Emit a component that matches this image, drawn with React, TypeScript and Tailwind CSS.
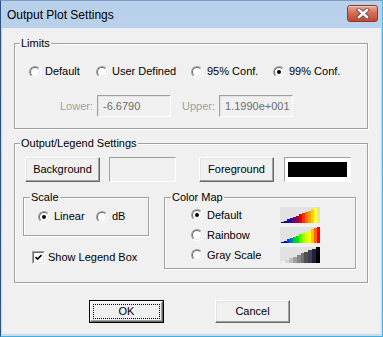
import type { ReactNode } from "react";

const DEFAULT_MAP = ["#000020", "#000080", "#1010b0", "#400090", "#700070", "#a00040", "#e00000", "#ff3000", "#ff7000", "#f0a000", "#ffd000", "#ffff40", "#e8e4a0"];
const RAINBOW_MAP = ["#000080", "#0000d0", "#0040ff", "#008090", "#00c060", "#00e000", "#40ff00", "#a0ff00", "#e0ff00", "#ffff00", "#ffc000", "#ff6000", "#ff0000"];
const GRAY_MAP = ["#f4f4ec", "#c8dcd4", "#b8c4c4", "#a0a0a0", "#888888", "#707078", "#505048", "#404058", "#202040", "#000000"];

function Radio({ checked }: { checked?: boolean }) {
  return (
    <span className="flex h-[12px] w-[12px] shrink-0 rounded-full border border-t-[#a0a0a0] border-l-[#a0a0a0] border-r-white border-b-white">
      <span className="flex h-full w-full items-center justify-center rounded-full border border-t-[#696969] border-l-[#696969] border-r-[#e3e3e3] border-b-[#e3e3e3] bg-white">
        {checked && <span className="h-[4px] w-[4px] rounded-full bg-black" />}
      </span>
    </span>
  );
}

function RadioItem({ label, checked, className = "" }: { label: string; checked?: boolean; className?: string }) {
  return (
    <div className={`flex items-center gap-[4px] ${className}`}>
      <Radio checked={checked} />
      <span>{label}</span>
    </div>
  );
}

function Group({ label, className = "", legendClass = "ml-[5px]", children }: { label: string; className?: string; legendClass?: string; children: ReactNode }) {
  return (
    <fieldset className={`border border-[#a0a0a0] shadow-[inset_1px_1px_0_#fff,1px_1px_0_#fff] ${className}`}>
      <legend className={`bg-[#f0f0f0] px-[1px] leading-[13px] ${legendClass}`}>{label}</legend>
      {children}
    </fieldset>
  );
}

function Button({ label, className = "" }: { label: string; className?: string }) {
  return (
    <div className={`flex items-center justify-center border border-t-white border-l-white border-r-[#696969] border-b-[#696969] shadow-[inset_-1px_-1px_0_#a0a0a0,inset_1px_1px_0_#e3e3e3] ${className}`}>
      {label}
    </div>
  );
}

function DisabledField({ value }: { value: string }) {
  return (
    <div className="flex h-[22px] w-[74px] items-center border border-t-[#a0a0a0] border-l-[#a0a0a0] border-r-white border-b-white pl-[5px] text-[#6d6d6d] shadow-[inset_1px_1px_0_#e3e3e3]">
      {value}
    </div>
  );
}

function ColorRamp({ colors, barWidth }: { colors: string[]; barWidth: number }) {
  return (
    <div className="flex h-[16px] w-[40px] items-end bg-[#e2e2e2] pl-[1px]">
      {colors.map((c, i) => (
        <div key={i} style={{ width: barWidth, height: Math.max(1, Math.round(((i + 1) / colors.length) * 16)), background: c }} />
      ))}
    </div>
  );
}

function CloseIcon() {
  return (
    <svg width="14" height="11" viewBox="0 0 14 11">
      <path d="M3 2 L11 9 M11 2 L3 9" stroke="#6a4a46" strokeWidth="4.2" strokeLinecap="square" />
      <path d="M3 2 L11 9 M11 2 L3 9" stroke="#ffffff" strokeWidth="2.4" strokeLinecap="square" />
    </svg>
  );
}

export default function App() {
  return (
    <div className="flex h-[337px] w-[383px] flex-col border border-t-[#7a9cc2] border-l-[#2d5180] border-r-[#46b8e6] border-b-[#3cb0e2] bg-gradient-to-b from-[#b8d0ea] to-[#c8dbef] font-['Liberation_Sans',Arial,sans-serif] text-[11px] text-black">
      {/* title bar */}
      <div className="flex h-[27px] shrink-0 items-start justify-between pl-[6px] pr-[4px]">
        <span className="mt-[7px] text-[12px] leading-[14px] text-black">Output Plot Settings</span>
        <div className="mt-[4px] flex h-[17px] w-[31px] items-center justify-center rounded-[3px] border border-[#8b3a2f] bg-gradient-to-b from-[#e9a796] via-[#d46a55] to-[#c4452e] shadow-[inset_0_1px_0_#f4c7bb]">
          <CloseIcon />
        </div>
      </div>

      {/* client area */}
      <div className="mx-[1px] mb-[2px] flex-1 border border-[#e6eef8] bg-[#f0f0f0]">
        <Group label="Limits" className="ml-[11px] mt-[8px] w-[354px] pb-[11px]">
          <div className="mt-[15px] flex h-[13px] items-center pl-[14px] leading-[13px]">
            <RadioItem label="Default" className="w-[67px]" />
            <RadioItem label="User Defined" className="w-[95px]" />
            <RadioItem label="95% Conf." className="w-[82px]" />
            <RadioItem label="99% Conf." checked />
          </div>
          <div className="mt-[17px] flex items-center pl-[45px]">
            <span className="w-[37px] text-[#a0a0a0]">Lower:</span>
            <DisabledField value="-6.6790" />
            <span className="ml-[11px] w-[37px] text-[#a0a0a0]">Upper:</span>
            <DisabledField value="1.1990e+001" />
          </div>
        </Group>

        <Group label="Output/Legend Settings" className="ml-[11px] mt-[8px] w-[354px] pb-[13px]">
          <div className="mt-[7px] flex h-[25px] items-stretch pl-[10px]">
            <Button label="Background" className="w-[75px]" />
            <div className="ml-[9px] w-[67px] border border-t-[#a0a0a0] border-l-[#a0a0a0] border-r-white border-b-white bg-[#f0f0f0]" />
            <Button label="Foreground" className="ml-[23px] w-[75px]" />
            <div className="ml-[10px] w-[67px] border border-t-[#a0a0a0] border-l-[#a0a0a0] border-r-white border-b-white bg-white px-[3px] py-[4px]">
              <div className="h-full w-full bg-black" />
            </div>
          </div>

          <div className="mt-[9px] flex items-start pl-[8px]">
            <div className="flex w-[126px] flex-col">
              <Group label="Scale" legendClass="ml-[6px]" className="w-[126px] pb-[12px]">
                <div className="mt-[6px] flex h-[13px] items-center pl-[14px] leading-[13px]">
                  <RadioItem label="Linear" checked className="w-[58px]" />
                  <RadioItem label="dB" />
                </div>
              </Group>
              <div className="ml-[9px] mt-[15px] flex h-[13px] items-center gap-[3px] leading-[13px]">
                <span className="flex h-[13px] w-[13px] border border-t-[#a0a0a0] border-l-[#a0a0a0] border-r-white border-b-white">
                  <span className="flex h-full w-full items-center justify-center border border-t-[#696969] border-l-[#696969] border-r-[#e3e3e3] border-b-[#e3e3e3] bg-white">
                    <svg width="7" height="7" viewBox="0 0 7 7">
                      <path d="M0.5 3 L2.5 5 L6.5 1" stroke="#000" strokeWidth="1.6" fill="none" />
                    </svg>
                  </span>
                </span>
                <span>Show Legend Box</span>
              </div>
            </div>

            <Group label="Color Map" legendClass="ml-[6px]" className="ml-[15px] w-[192px] pb-[3px]">
              <div className="mt-[1px] flex flex-col pl-[26px] leading-[13px]">
                <div className="flex h-[20px] items-center">
                  <RadioItem label="Default" checked className="w-[89px]" />
                  <ColorRamp colors={DEFAULT_MAP} barWidth={3} />
                </div>
                <div className="flex h-[20px] items-center">
                  <RadioItem label="Rainbow" className="w-[89px]" />
                  <ColorRamp colors={RAINBOW_MAP} barWidth={3} />
                </div>
                <div className="flex h-[20px] items-center">
                  <RadioItem label="Gray Scale" className="w-[89px]" />
                  <ColorRamp colors={GRAY_MAP} barWidth={4} />
                </div>
              </div>
            </Group>
          </div>
        </Group>

        <div className="mt-[17px] flex pl-[86px]">
          <div className="flex h-[23px] w-[75px] border border-black">
            <div className="relative flex flex-1 items-center justify-center border border-t-white border-l-white border-r-[#696969] border-b-[#696969] shadow-[inset_-1px_-1px_0_#a0a0a0]">
              <span className="absolute inset-[2px] border border-dotted border-black" />
              OK
            </div>
          </div>
          <Button label="Cancel" className="ml-[51px] h-[23px] w-[75px]" />
        </div>
      </div>
    </div>
  );
}
